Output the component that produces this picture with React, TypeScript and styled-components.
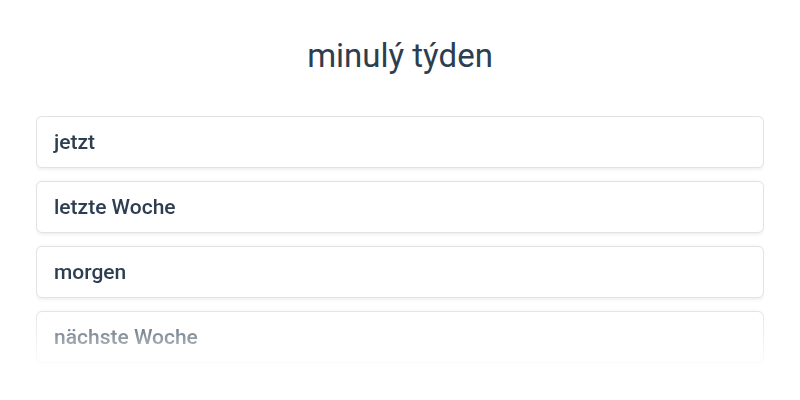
import React from "react";
import styled, { createGlobalStyle } from "styled-components";

const GlobalStyle = createGlobalStyle`
  body {
    margin: 0;
    background: #ffffff;
    font-family: Roboto, "Liberation Sans", sans-serif;
  }
`;

const Page = styled.div`
  width: 800px;
  height: 400px;
  padding: 36px 36px 0;
  box-sizing: border-box;
  overflow: hidden;
`;

const Title = styled.h1`
  margin: 0 0 40px;
  text-align: center;
  font-size: 33px;
  font-weight: 400;
  line-height: 40px;
  color: #2c3e50;
`;

const List = styled.div`
  display: flex;
  flex-direction: column;
  gap: 13px;
  padding-bottom: 8px;
  mask-image: linear-gradient(to bottom, #000 74%, rgba(0, 0, 0, 0.05) 100%);
  -webkit-mask-image: linear-gradient(to bottom, #000 74%, rgba(0, 0, 0, 0.05) 100%);
`;

const Option = styled.div`
  height: 52px;
  box-sizing: border-box;
  display: flex;
  align-items: center;
  padding: 0 17px;
  background: #ffffff;
  border: 1px solid #e2e2e2;
  border-radius: 6px;
  box-shadow: 0 1px 4px rgba(0, 0, 0, 0.09);
  font-size: 21px;
  font-weight: 500;
  color: #2c3e50;
`;

const options = ["jetzt", "letzte Woche", "morgen", "nächste Woche"];

export default function App() {
  return (
    <>
      <GlobalStyle />
      <Page>
        <Title>minulý týden</Title>
        <List>
          {options.map((o) => (
            <Option key={o}>{o}</Option>
          ))}
        </List>
      </Page>
    </>
  );
}
